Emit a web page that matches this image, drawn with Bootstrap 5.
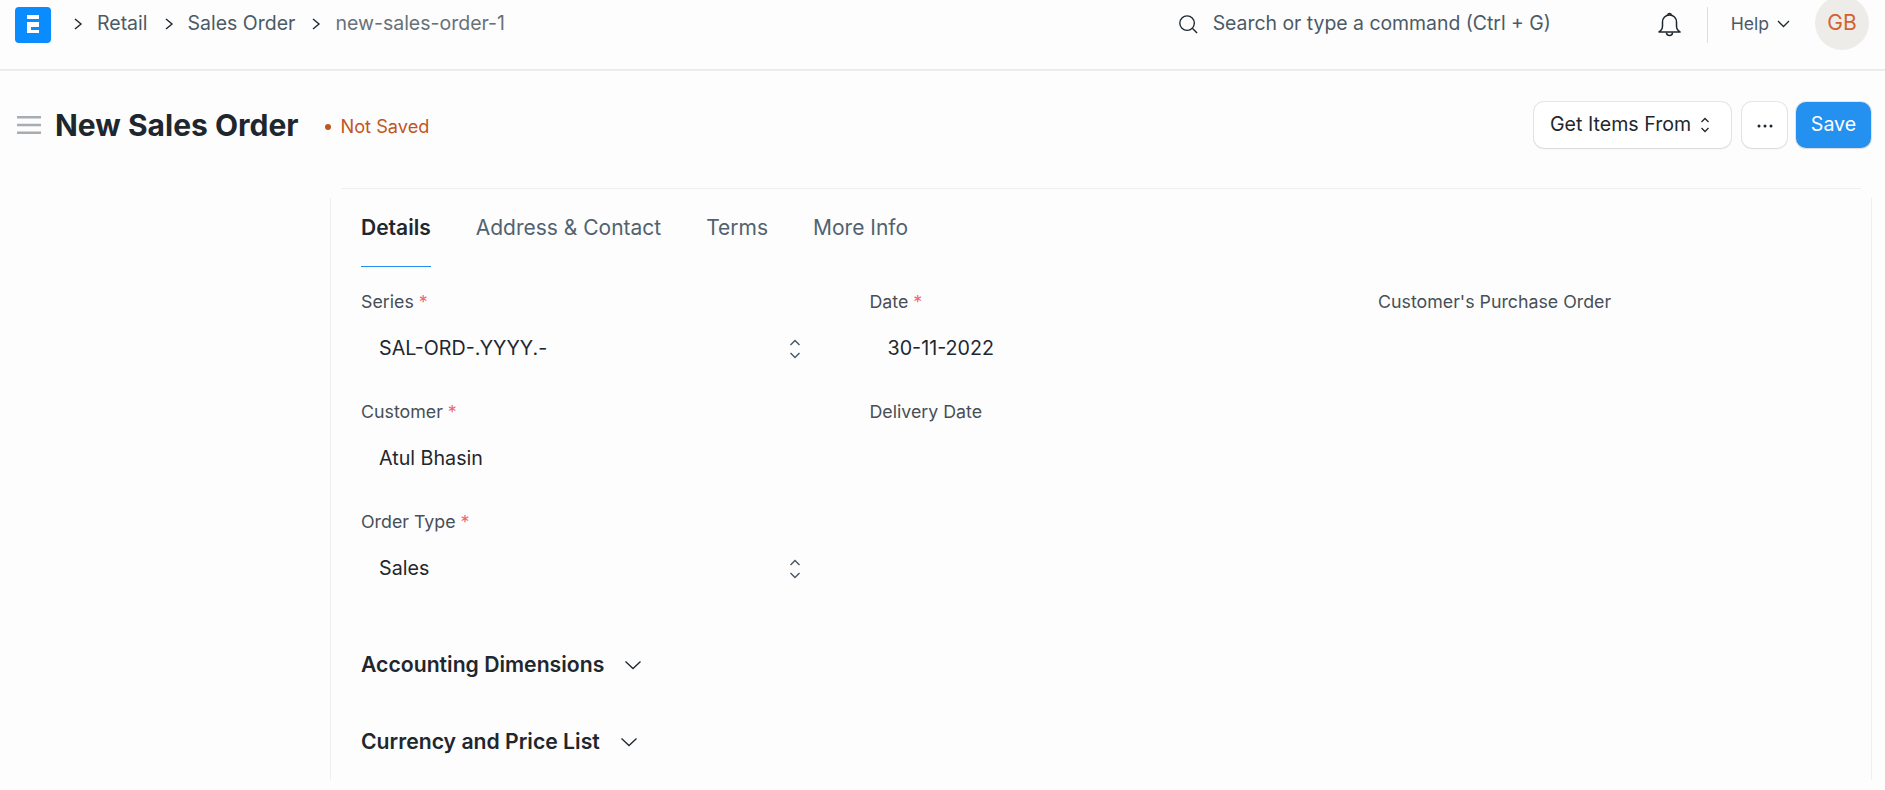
<!DOCTYPE html>
<html lang="en">
<head>
    <meta charset="UTF-8">
    <title>New Sales Order</title>
    <link href="https://cdn.jsdelivr.net/npm/bootstrap@5.3.0/dist/css/bootstrap.min.css" rel="stylesheet">
    <style>
        body {
            background-color: #fdfdfd;
            font-family: Inter, "Liberation Sans", sans-serif;
            color: #1f272e;
            height: 790px;
            overflow: hidden;
        }
        .top-bar {
            height: 71px;
            border-bottom: 2px solid #ebeced;
            padding: 7px 16px 0 15px;
            align-items: flex-start;
        }
        .app-logo { width: 36px; height: 36px; }
        .crumbs { margin-left: 22px; height: 34px; font-size: 19.5px; color: #4c5a67; }
        .crumbs svg { margin-right: 14px; }
        .crumbs span { margin-right: 16px; color: #4c5a67; }
        .crumbs .crumb-last { color: #687178; }
        .cmd-search { margin-left: auto; height: 34px; font-size: 19.4px; color: #4c5a67; width: 454px; }
        .cmd-search svg { margin-right: 15px; }
        .bell-box { width: 76px; height: 36px; border-right: 1px solid #d5e1ea; }
        .help-link { font-size: 17.6px; color: #4c5a67; height: 34px; margin-left: 23px; margin-right: 25px; }
        .avatar-ring {
            width: 54px; height: 54px; margin-top: -11px;
            border-radius: 50%;
            background-color: #eeece9;
            color: #d4612e;
            font-size: 21px;
        }
        .page-head { height: 108px; margin-bottom: 9px; padding: 0 14px 0 17px; }
        .page-title { font-size: 30px; font-weight: 700; margin: 0 26px 0 14px; color: #1f272e; }
        .draft-state { font-size: 18.2px; color: #c0561f; padding-top: 4px; }
        .draft-dot { width: 6px; height: 6px; background-color: #c0561f; border-radius: 50%; margin-right: 10px; }
        .act-btn {
            height: 46px;
            font-size: 19.6px;
            border: 0;
            border-radius: 10px;
            background-color: #fff;
            color: #1f272e;
            box-shadow: 0 0 0 1px rgba(0,0,0,.09), 0 1px 2px rgba(0,0,0,.06);
        }
        .act-items { width: 197px; padding: 0 18px 0 16px; gap: 9px; white-space: nowrap; }
        .act-more { width: 45px; padding: 0; margin: 0 9px 0 11px; }
        .act-save { background-color: #2490ef; color: #fff; width: 75px; padding: 0; }
        /* hairlines stop short of the corners, as in the picture */
        .form-sheet {
            margin-left: 330px;
            margin-right: 13px;
            padding: 1px 0 0 31px;
            background:
                linear-gradient(#eeeff0, #eeeff0) 11px 0 / calc(100% - 22px) 1px no-repeat,
                linear-gradient(#eeeff0, #eeeff0) 0 10px / 1px 100% no-repeat,
                linear-gradient(#eeeff0, #eeeff0) 100% 10px / 1px 100% no-repeat;
        }
        .tab-strip { height: 78px; gap: 45px; font-size: 21px; color: #526270; }
        .tab-item { height: 78px; padding-top: 23px; }
        .tab-active { font-weight: 600; color: #1f272e; border-bottom: 1px solid #2490ef; }
        .field-row { margin: 0; flex-wrap: nowrap; }
        .field-col { width: 508.5px; padding: 0; flex-shrink: 0; }
        .field-box { height: 110px; padding-top: 23px; }
        .field-name { font-size: 17.8px; color: #474f57; line-height: 24px; }
        .req-star { color: #ec6a73; }
        .field-value {
            width: 440px;
            margin-top: 17px;
            padding-left: 18px;
            font-size: 19.7px;
            height: 36px;
            color: #1f272e;
        }
        .sect-head { font-size: 21.2px; font-weight: 600; height: 77px; color: #1f272e; gap: 20px; }
        .sect-first { margin-top: 29px; }
    </style>
</head>
<body>

<div class="top-bar d-flex">
    <svg class="app-logo" viewBox="0 0 36 36">
        <rect width="36" height="36" rx="4" fill="#0a8cff"/>
        <rect x="12" y="8" width="12" height="4" fill="#fff"/>
        <path d="M12 15h12v11H12zM16 20v3h8v-3z" fill="#fff" fill-rule="evenodd"/>
    </svg>
    <div class="crumbs d-flex align-items-center">
        <svg width="10" height="14" viewBox="0 0 10 14"><path d="M2 2l6 5-6 5" fill="none" stroke="#1f272e" stroke-width="1.4"/></svg>
        <span>Retail</span>
        <svg width="10" height="14" viewBox="0 0 10 14"><path d="M2 2l6 5-6 5" fill="none" stroke="#1f272e" stroke-width="1.4"/></svg>
        <span>Sales Order</span>
        <svg width="10" height="14" viewBox="0 0 10 14"><path d="M2 2l6 5-6 5" fill="none" stroke="#1f272e" stroke-width="1.4"/></svg>
        <span class="crumb-last">new-sales-order-1</span>
    </div>
    <div class="cmd-search d-flex align-items-center">
        <svg width="20" height="20" viewBox="0 0 22 22"><circle cx="10" cy="10" r="8" fill="none" stroke="#1f272e" stroke-width="1.5"/><path d="M16 16l5 5" stroke="#1f272e" stroke-width="1.5"/></svg>
        Search or type a command (Ctrl + G)
    </div>
    <div class="bell-box d-flex align-items-center justify-content-center">
        <svg width="23" height="26" viewBox="0 0 23 26"><path d="M1 20c2.500-1.500 3.500-3.500 3.500-6V10c0-4 3-7 7-7s7 3 7 7v4c0 2.500 1 4.500 3.500 6z" fill="none" stroke="#1f272e" stroke-width="1.500" stroke-linejoin="round"/><path d="M8.500 20.500a3 3 0 0 0 6 0" fill="none" stroke="#1f272e" stroke-width="1.500"/><path d="M9.800 3.200a1.700 1.700 0 0 1 3.400 0" fill="none" stroke="#1f272e" stroke-width="1.500"/></svg>
    </div>
    <div class="help-link d-flex align-items-center gap-2">
        Help
        <svg width="13" height="8" viewBox="0 0 13 8"><path d="M1 1l5.500 5.500L12 1" fill="none" stroke="#1f272e" stroke-width="1.300"/></svg>
    </div>
    <div class="avatar-ring d-flex align-items-center justify-content-center">GB</div>
</div>

<div class="page-head d-flex align-items-center">
    <svg width="24" height="18" viewBox="0 0 24 18"><path d="M0 1.200h24M0 9h24M0 16.800h24" stroke="#a6adb3" stroke-width="2.400"/></svg>
    <h1 class="page-title">New Sales Order</h1>
    <div class="draft-state d-flex align-items-center"><span class="draft-dot"></span>Not Saved</div>
    <div class="ms-auto d-flex align-items-center">
        <button class="btn act-btn act-items d-flex align-items-center" type="button">
            Get Items From
            <svg width="10" height="16" viewBox="0 0 10 16"><path d="M1.500 5l3.500-3.500 3.500 3.500M1.500 11l3.500 3.500 3.500-3.500" fill="none" stroke="#1f272e" stroke-width="1.300"/></svg>
        </button>
        <button class="btn act-btn act-more" type="button">
            <svg width="16" height="4" viewBox="0 0 16 4"><circle cx="2" cy="2" r="1.500" fill="#1f272e"/><circle cx="8" cy="2" r="1.500" fill="#1f272e"/><circle cx="14" cy="2" r="1.500" fill="#1f272e"/></svg>
        </button>
        <button class="btn act-btn act-save" type="button">Save</button>
    </div>
</div>

<div class="form-sheet">
    <div class="tab-strip d-flex">
        <div class="tab-item tab-active">Details</div>
        <div class="tab-item">Address &amp; Contact</div>
        <div class="tab-item">Terms</div>
        <div class="tab-item">More Info</div>
    </div>
    <div class="row field-row">
        <div class="field-col">
            <div class="field-box">
                <div class="field-name">Series <span class="req-star">*</span></div>
                <div class="field-value d-flex align-items-center justify-content-between">SAL-ORD-.YYYY.-
                    <svg width="12" height="20" viewBox="0 0 12 20"><path d="M1.500 6l4.500-4.500 4.500 4.500M1.500 14l4.500 4.500 4.500-4.500" fill="none" stroke="#4c5a67" stroke-width="1.500"/></svg>
                </div>
            </div>
            <div class="field-box">
                <div class="field-name">Customer <span class="req-star">*</span></div>
                <div class="field-value d-flex align-items-center">Atul Bhasin</div>
            </div>
            <div class="field-box">
                <div class="field-name">Order Type <span class="req-star">*</span></div>
                <div class="field-value d-flex align-items-center justify-content-between">Sales
                    <svg width="12" height="20" viewBox="0 0 12 20"><path d="M1.500 6l4.500-4.500 4.500 4.500M1.500 14l4.500 4.500 4.500-4.500" fill="none" stroke="#4c5a67" stroke-width="1.500"/></svg>
                </div>
            </div>
        </div>
        <div class="field-col">
            <div class="field-box">
                <div class="field-name">Date <span class="req-star">*</span></div>
                <div class="field-value d-flex align-items-center">30-11-2022</div>
            </div>
            <div class="field-box">
                <div class="field-name">Delivery Date</div>
            </div>
        </div>
        <div class="field-col">
            <div class="field-box">
                <div class="field-name">Customer's Purchase Order</div>
            </div>
        </div>
    </div>
    <div class="sect-head sect-first d-flex align-items-center">
        Accounting Dimensions
        <svg width="18" height="10" viewBox="0 0 18 10"><path d="M1.500 1.500l7.500 7 7.500-7" fill="none" stroke="#1f272e" stroke-width="1.300"/></svg>
    </div>
    <div class="sect-head d-flex align-items-center">
        Currency and Price List
        <svg width="18" height="10" viewBox="0 0 18 10"><path d="M1.500 1.500l7.500 7 7.500-7" fill="none" stroke="#1f272e" stroke-width="1.300"/></svg>
    </div>
</div>

<script src="https://cdn.jsdelivr.net/npm/bootstrap@5.3.0/dist/js/bootstrap.bundle.min.js"></script>
</body>
</html>
